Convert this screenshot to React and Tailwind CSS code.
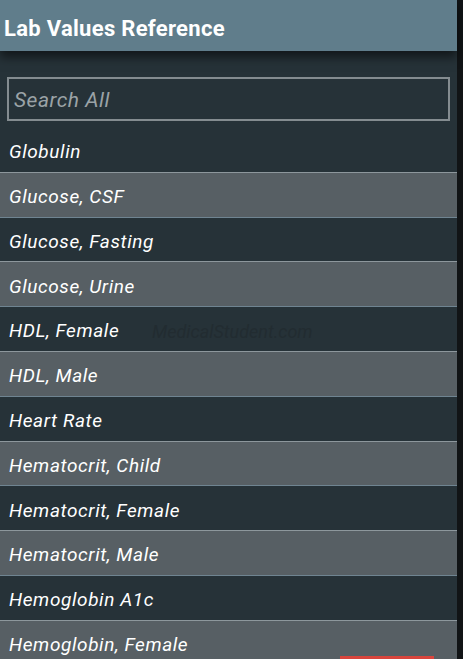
export default function App() {
  const items = [
    "Globulin",
    "Glucose, CSF",
    "Glucose, Fasting",
    "Glucose, Urine",
    "HDL, Female",
    "HDL, Male",
    "Heart Rate",
    "Hematocrit, Child",
    "Hematocrit, Female",
    "Hematocrit, Male",
    "Hemoglobin A1c",
    "Hemoglobin, Female",
  ];
  return (
    <div className="w-[463px] h-[659px] overflow-hidden bg-[#111416] flex" style={{ fontFamily: "Roboto, 'Liberation Sans', sans-serif" }}>
      <div className="w-[457px] h-full flex flex-col bg-[#263238] relative">
        <div className="h-[51px] shrink-0 bg-[#607d8b] flex items-center pl-[4px] shadow-[0_6px_10px_rgba(0,0,0,0.55)] relative z-10">
          <span className="text-white font-bold text-[22px] tracking-[0.3px] mt-[6px]">Lab Values Reference</span>
        </div>
        <div className="pt-[26px] px-[7px]">
          <div className="h-[44px] border-2 border-[#848c90] flex items-center pl-[5px]">
            <span className="italic text-[21px] tracking-[0.5px] text-[#9ba3a7] mt-[3px]">Search All</span>
          </div>
        </div>
        <div className="flex flex-col mt-[6px]">
          {items.map((t, i) => (
            <div
              key={t}
              className={
                i % 2 === 1
                  ? "h-[44.8px] shrink-0 flex items-center pl-[9px] bg-[#575f64] border-t border-[#8d979c]"
                  : i === 0
                  ? "h-[44.8px] shrink-0 flex items-center pl-[9px] bg-[#263238]"
                  : "h-[44.8px] shrink-0 flex items-center pl-[9px] bg-[#263238] border-t border-[#6f8491]"
              }
            >
              <span className="italic text-white text-[19px] tracking-[0.6px] mt-[5px]">{t}</span>
            </div>
          ))}
        </div>
        <div className="absolute left-[152px] top-[318px] text-[18px] text-[#222c31] italic pointer-events-none">MedicalStudent.com</div>
        <div className="absolute left-[340px] bottom-0 w-[94px] h-[3px] bg-[#d9453d]" />
      </div>
    </div>
  );
}
